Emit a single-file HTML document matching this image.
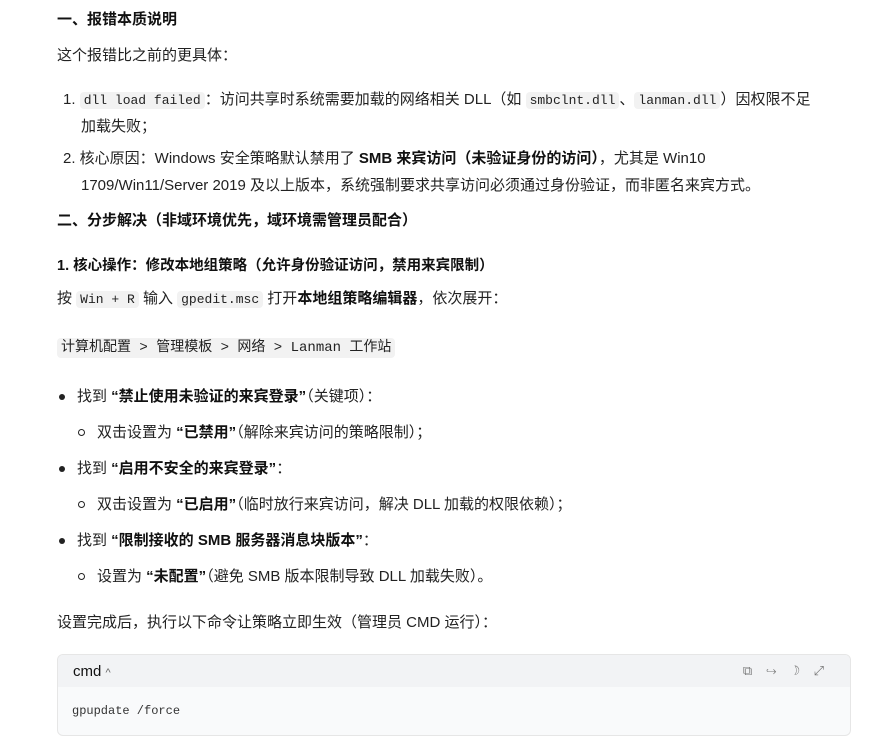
<!DOCTYPE html>
<html><head><meta charset="utf-8"><style>
body{margin:0;width:894px;height:743px;background:#fff;font-family:"Liberation Sans","Noto Sans CJK SC",sans-serif;font-size:15px;color:#222;position:relative;overflow:hidden}
.l{position:absolute;white-space:nowrap;line-height:20px}
b{font-weight:700;color:#111}
code{font-family:"Liberation Mono","Noto Sans CJK SC",monospace;font-size:13px;background:#f2f2f2;border-radius:4px;padding:1px 4px}
.dot{position:absolute;width:6px;height:6px;border-radius:50%;background:#222}
.circ{position:absolute;width:5px;height:5px;border-radius:50%;border:1.3px solid #222}
</style></head><body>
<div class="l" style="left:57px;top:10px"><b>一、报错本质说明</b></div>
<div class="l" style="left:57px;top:46px">这个报错比之前的更具体：</div>
<div class="l" style="left:63px;top:90px">1. <code>dll load failed</code>：访问共享时系统需要加载的网络相关 DLL（如 <code>smbclnt.dll</code>、<code>lanman.dll</code>）因权限不足</div>
<div class="l" style="left:81px;top:117px">加载失败；</div>
<div class="l" style="left:63px;top:149px">2. 核心原因：Windows 安全策略默认禁用了 <b>SMB 来宾访问（未验证身份的访问）</b>，尤其是 Win10</div>
<div class="l" style="left:81px;top:176px">1709/Win11/Server 2019 及以上版本，系统强制要求共享访问必须通过身份验证，而非匿名来宾方式。</div>
<div class="l" style="left:57px;top:211px"><b>二、分步解决（非域环境优先，域环境需管理员配合）</b></div>
<div class="l" style="left:57px;top:256px;font-size:14.5px"><b>1. 核心操作：修改本地组策略（允许身份验证访问，禁用来宾限制）</b></div>
<div class="l" style="left:57px;top:289px">按 <code>Win + R</code> 输入 <code>gpedit.msc</code> 打开<b>本地组策略编辑器</b>，依次展开：</div>
<div class="l" style="left:57px;top:337px"><code style="font-size:14px;padding:2px 4px">计算机配置 &gt; 管理模板 &gt; 网络 &gt; Lanman 工作站</code></div>
<div class="dot" style="left:59px;top:394px"></div>
<div class="l" style="left:77px;top:387px">找到 <b>“禁止使用未验证的来宾登录”</b>（关键项）：</div>
<div class="circ" style="left:78px;top:429px"></div>
<div class="l" style="left:97px;top:423px">双击设置为 <b>“已禁用”</b>（解除来宾访问的策略限制）；</div>
<div class="dot" style="left:59px;top:466px"></div>
<div class="l" style="left:77px;top:459px">找到 <b>“启用不安全的来宾登录”</b>：</div>
<div class="circ" style="left:78px;top:501px"></div>
<div class="l" style="left:97px;top:495px">双击设置为 <b>“已启用”</b>（临时放行来宾访问，解决 DLL 加载的权限依赖）；</div>
<div class="dot" style="left:59px;top:538px"></div>
<div class="l" style="left:77px;top:531px">找到 <b>“限制接收的 SMB 服务器消息块版本”</b>：</div>
<div class="circ" style="left:78px;top:573px"></div>
<div class="l" style="left:97px;top:567px">设置为 <b>“未配置”</b>（避免 SMB 版本限制导致 DLL 加载失败）。</div>
<div class="l" style="left:57px;top:613px">设置完成后，执行以下命令让策略立即生效（管理员 CMD 运行）：</div>
<div style="position:absolute;left:57px;top:654px;width:792px;height:80px;border:1px solid #e6e6e6;border-radius:6px;background:#f9fafb;overflow:hidden">
<div style="height:32px;background:#f2f3f5;position:relative">
<div class="l" style="left:15px;top:7px;font-size:15px;color:#111">cmd <span style="font-size:11px;color:#666">^</span></div>
<div class="l" style="right:12px;top:6px;font-size:13px;color:#777;letter-spacing:14px">⧉↪☽⤢</div>
</div>
<div class="l" style="left:14px;top:46px;font-family:'Liberation Mono',monospace;font-size:12px;color:#333">gpupdate /force</div>
</div>
</body></html>
